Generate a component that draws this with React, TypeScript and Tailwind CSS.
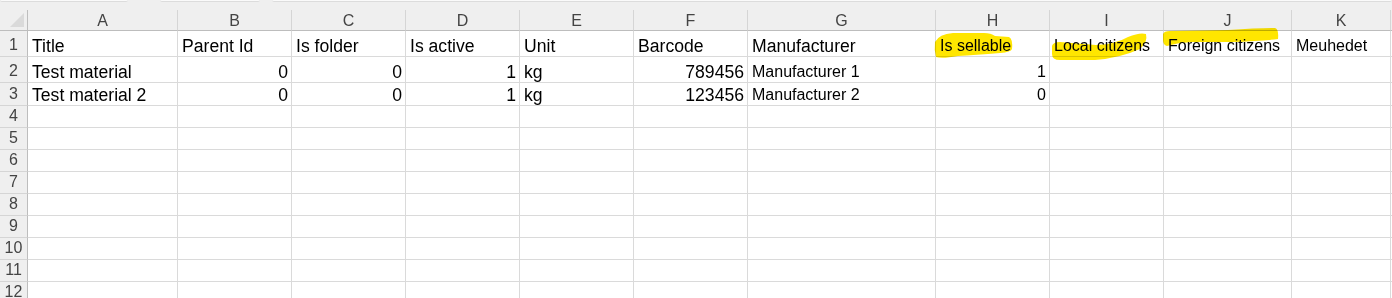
import React from "react";

type Col = { key: string; w: number };

const COLS: Col[] = [
  { key: "A", w: 150 },
  { key: "B", w: 114 },
  { key: "C", w: 114 },
  { key: "D", w: 114 },
  { key: "E", w: 114 },
  { key: "F", w: 114 },
  { key: "G", w: 188 },
  { key: "H", w: 114 },
  { key: "I", w: 114 },
  { key: "J", w: 128 },
  { key: "K", w: 99 },
];

const ROW_HEIGHTS = [26, 26, 23, 22, 22, 22, 22, 22, 22, 22, 22, 22];

type Cell = { v: string; right?: boolean; small?: boolean };

const DATA: Record<number, Record<string, Cell>> = {
  1: {
    A: { v: "Title" },
    B: { v: "Parent Id" },
    C: { v: "Is folder" },
    D: { v: "Is active" },
    E: { v: "Unit" },
    F: { v: "Barcode" },
    G: { v: "Manufacturer" },
    H: { v: "Is sellable", small: true },
    I: { v: "Local citizens", small: true },
    J: { v: "Foreign citizens", small: true },
    K: { v: "Meuhedet", small: true },
  },
  2: {
    A: { v: "Test material" },
    B: { v: "0", right: true },
    C: { v: "0", right: true },
    D: { v: "1", right: true },
    E: { v: "kg" },
    F: { v: "789456", right: true },
    G: { v: "Manufacturer 1", small: true },
    H: { v: "1", right: true, small: true },
  },
  3: {
    A: { v: "Test material 2" },
    B: { v: "0", right: true },
    C: { v: "0", right: true },
    D: { v: "1", right: true },
    E: { v: "kg" },
    F: { v: "123456", right: true },
    G: { v: "Manufacturer 2", small: true },
    H: { v: "0", right: true, small: true },
  },
};

function TopStrip() {
  return (
    <div className="flex h-[10px] shrink-0 items-start bg-[#efefef]">
      <div className="h-[2px] w-[128px] rounded-b-[2px] border-b border-[#dcdcdc] bg-[#fafafa]" />
      <div className="ml-[32px] h-[2px] w-[100px] rounded-b-[2px] border-b border-[#dcdcdc] bg-[#fafafa]" />
      <div className="ml-[12px] h-[2px] flex-1 rounded-b-[2px] border-b border-[#dcdcdc] bg-[#fafafa]" />
    </div>
  );
}

function HeaderRow() {
  return (
    <div className="flex h-[21px] shrink-0 bg-[#efefef]">
      {/* select-all corner */}
      <div className="flex h-full w-[28px] shrink-0 items-end justify-end border-r border-b border-[#bdbdbd] pr-[3px] pb-[3px]">
        <svg width="14" height="14">
          <polygon points="14,0 14,14 0,14" fill="#dadada" />
        </svg>
      </div>
      {COLS.map((c) => (
        <div
          key={c.key}
          style={{ width: c.w }}
          className="flex h-full shrink-0 items-center justify-center border-r border-b border-r-[#d5d5d5] border-b-[#bdbdbd] pt-[1px] text-[16px] leading-none text-[#444444]"
        >
          {c.key}
        </div>
      ))}
      <div className="h-full flex-1 border-b border-[#bdbdbd]" />
    </div>
  );
}

function Row({ n, h }: { n: number; h: number }) {
  const cells = DATA[n] || {};
  return (
    <div className="flex shrink-0" style={{ height: h }}>
      <div className="flex h-full w-[28px] shrink-0 items-end justify-center border-r border-b border-r-[#bdbdbd] border-b-[#d5d5d5] bg-[#efefef] pb-[1px] text-[16px] leading-[20px] text-[#444444]">
        {n}
      </div>
      {COLS.map((c) => {
        const cell = cells[c.key];
        return (
          <div
            key={c.key}
            style={{ width: c.w }}
            className={
              "flex h-full shrink-0 items-end overflow-visible whitespace-nowrap border-r border-b border-[#dadada] pl-[4px] pr-[3px] leading-[20px] text-black " +
              (cell?.right ? "justify-end " : "justify-start ") +
              (cell?.small ? "text-[16px]" : "text-[17.6px]")
            }
          >
            {cell ? cell.v : ""}
          </div>
        );
      })}
      <div className="h-full flex-1 border-b border-[#dadada]" />
    </div>
  );
}

// Yellow marker strokes drawn over the header labels of columns H, I and J
function MarkerStrokes() {
  return (
    <svg
      width="1392"
      height="298"
      viewBox="0 0 1392 298"
      className="pointer-events-none absolute left-0 top-0 mix-blend-multiply"
    >
      <g fill="#ffe600">
        <path d="M935,42 Q939,34 953,33 L984,33 Q991,33 995,36 L1009,37 Q1013,39 1012,49 Q1011,52 1000,53 Q975,55 958,56 Q942,59 936,57 Q934,50 935,42 Z" />
        <path d="M1052,46 Q1053,42 1060,42 L1096,45 Q1116,44 1128,37 Q1140,32 1146,34 Q1148,42 1140,49 Q1120,58 1095,60 L1060,60 Q1052,60 1052,54 Z" />
        <path d="M1163,34 Q1164,31 1170,31 L1228,30 Q1258,28 1275,28 Q1279,29 1278,39 Q1262,41 1232,42 L1192,42 Q1176,43 1167,46 Q1163,45 1163,40 Z" />
      </g>
    </svg>
  );
}

export default function App() {
  return (
    <div
      className="relative flex h-[298px] w-[1392px] flex-col overflow-hidden bg-white"
      style={{ fontFamily: '"Liberation Sans", Arial, sans-serif' }}
    >
      <TopStrip />
      <HeaderRow />
      {ROW_HEIGHTS.map((h, i) => (
        <Row key={i} n={i + 1} h={h} />
      ))}
      <MarkerStrokes />
    </div>
  );
}
